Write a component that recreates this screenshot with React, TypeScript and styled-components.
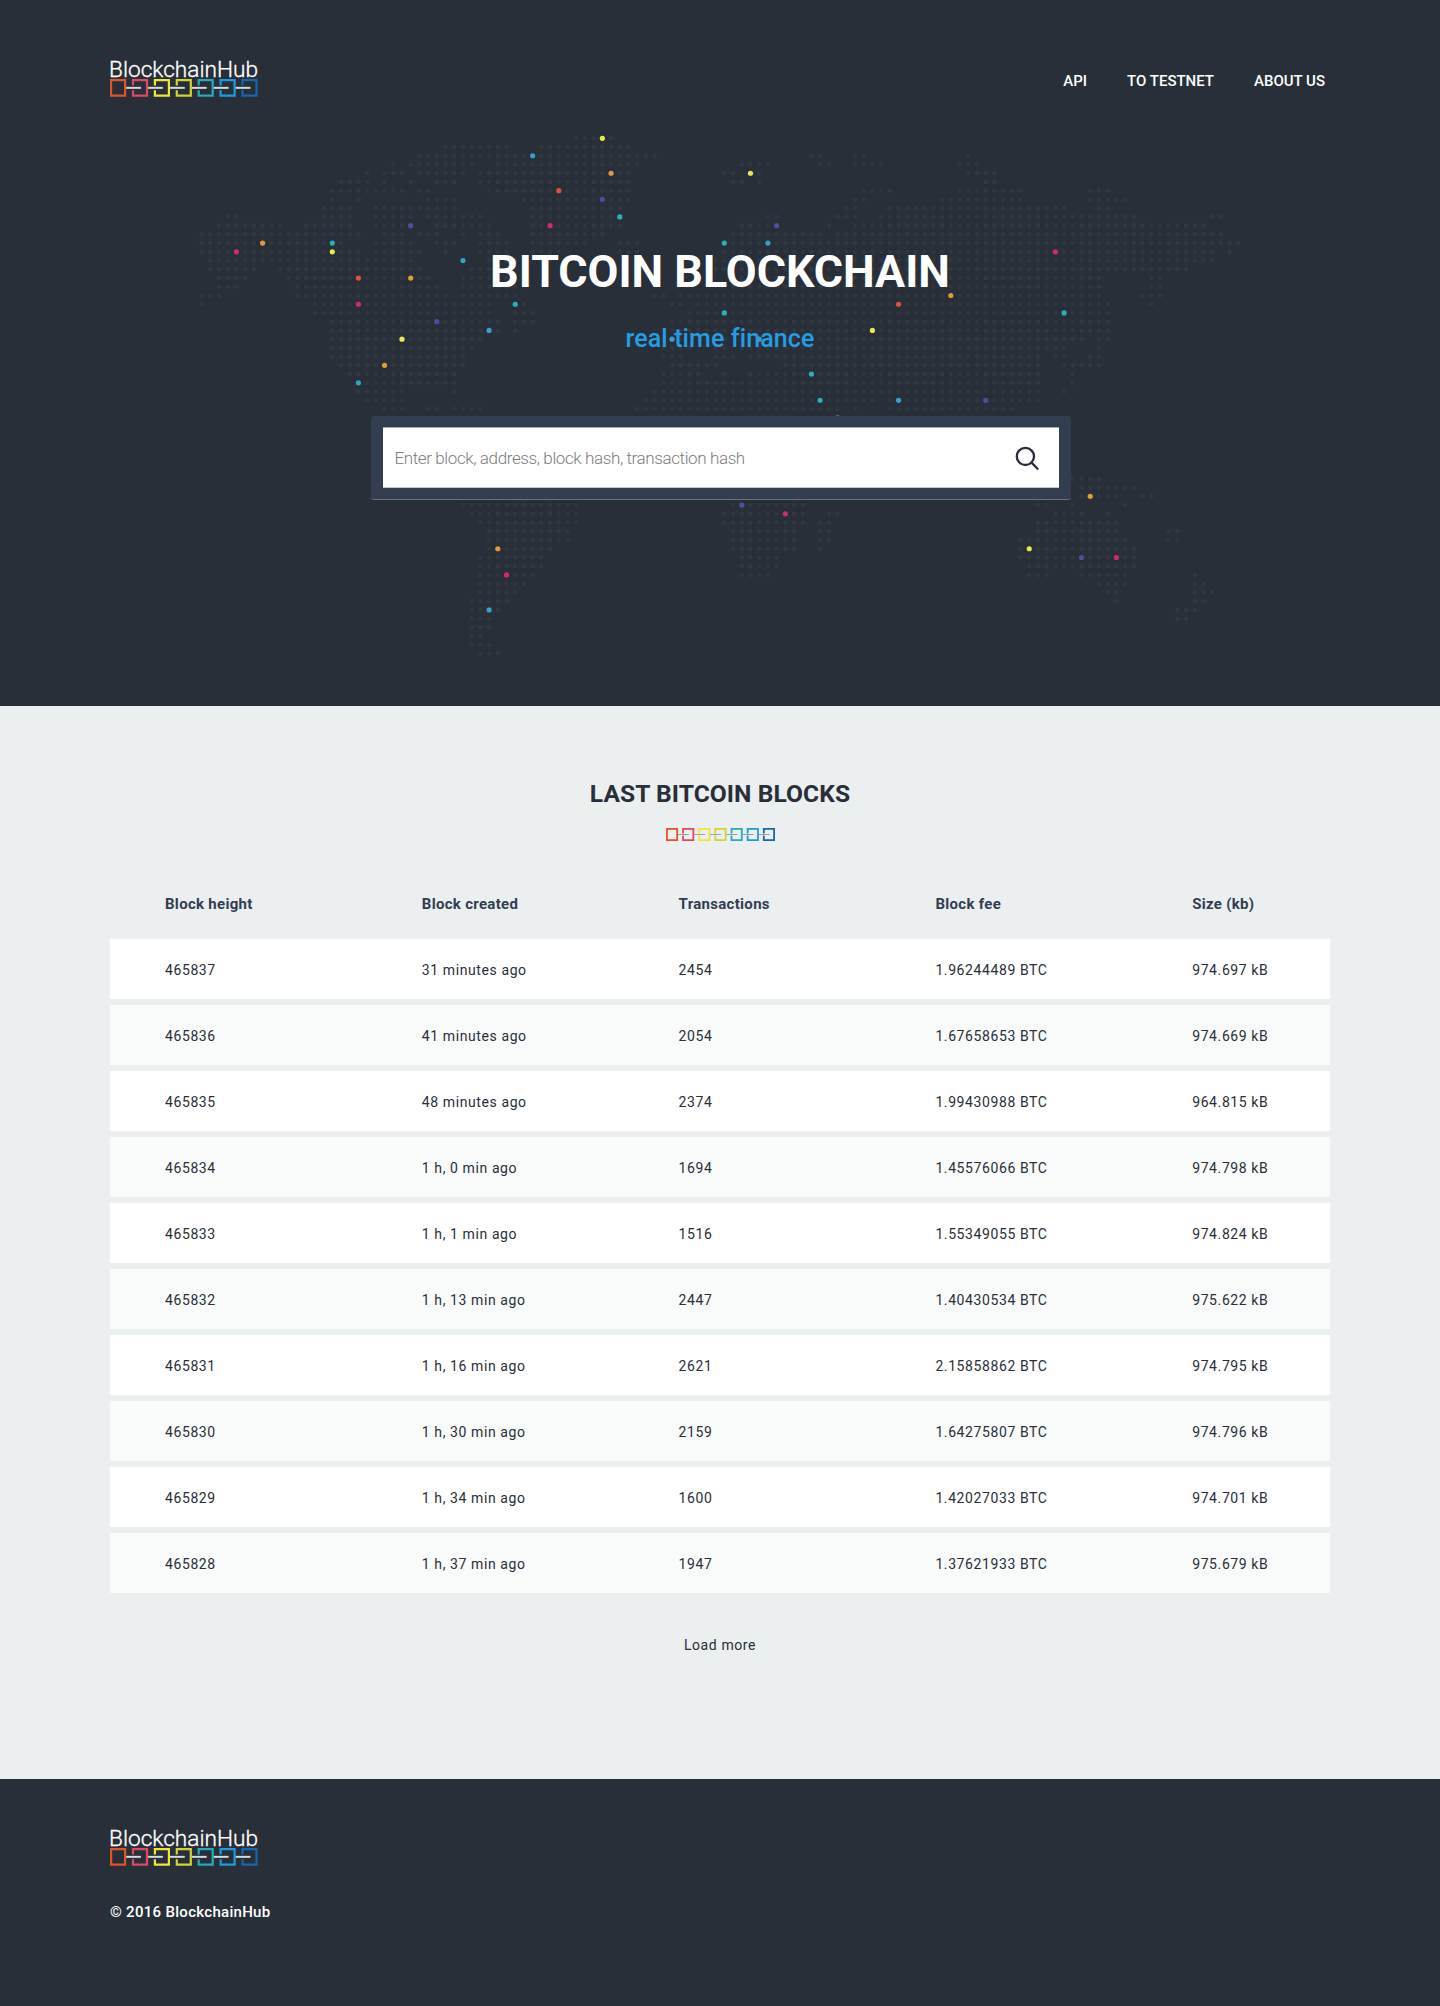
import React from "react";
import styled, { createGlobalStyle, css } from "styled-components";

const GlobalStyle = createGlobalStyle`
  *, *::before, *::after { box-sizing: border-box; }
  body {
    margin: 0;
    background: #282f39;
    font-family: Roboto, "Liberation Sans", sans-serif;
    color: #292e38;
  }
`;

const Hero = styled.header`
  position: relative;
  height: 706px;
  background: #282f39;
  overflow: hidden;
`;

const MapLayer = styled.svg`
  position: absolute;
  left: 0;
  top: 0;
  pointer-events: none;
`;

const Container = styled.div`
  position: relative;
  width: 1220px;
  margin: 0 auto;
`;

const TopBar = styled(Container)`
  display: flex;
  justify-content: space-between;
  align-items: flex-start;
  height: 98px;
  padding-top: 52px;
`;

const Nav = styled.nav`
  display: flex;
  gap: 40px;
  padding: 20px 5px 0 0;
`;

const NavLink = styled.a`
  font-size: 15px;
  line-height: 18px;
  font-weight: 500;
  color: #fff;
  text-decoration: none;
  text-transform: uppercase;
`;

const Intro = styled.div`
  position: relative;
  display: flex;
  flex-direction: column;
  align-items: center;
  padding-top: 147px;
`;

const Title = styled.h1`
  margin: 0;
  font-size: 44.8px;
  line-height: 54px;
  font-weight: 700;
  color: #fff;
`;

const Tagline = styled.p`
  margin: 24px 0 0;
  font-size: 25px;
  line-height: 32px;
  font-weight: 500;
  letter-spacing: 0.1px;
  color: #259de3;
`;

const SearchFrame = styled.form`
  width: 700px;
  height: 84px;
  margin: 61px 0 0 1px;
  padding: 11px 12px;
  background: #333d50;
  border-radius: 3px;
  border-bottom: 1px solid #697080;
`;

const SearchField = styled.label`
  display: flex;
  align-items: center;
  height: 61px;
  padding: 0 19px 0 12px;
  background: #fff;
  border-top: 1px solid #a5a8ae;
  border-bottom: 1px solid #c6c8cc;
`;

const SearchInput = styled.input`
  flex: 1;
  border: 0;
  padding: 0;
  outline: 0;
  background: transparent;
  font: 300 17px/24px Roboto, sans-serif;
  letter-spacing: -0.39px;
  &::placeholder { color: #7c7c7c; opacity: 1; }
`;

const Blocks = styled.main`
  height: 1073px;
  background: #ebeff0;
  padding-top: 73px;
`;

const SectionHead = styled.div`
  display: flex;
  flex-direction: column;
  align-items: center;
`;

const SectionTitle = styled.h2`
  margin: 0 0 19px;
  font-size: 24.6px;
  line-height: 30px;
  font-weight: 700;
  letter-spacing: 0.06px;
`;

const Table = styled(Container)`
  display: flex;
  flex-direction: column;
  gap: 6px;
  margin-top: 34px;
`;

const Row = styled.div<{ $head?: boolean; $alt?: boolean }>`
  display: grid;
  grid-template-columns: repeat(4, 256.8px) 1fr;
  align-items: center;
  height: 60px;
  padding: 2px 0 0 55px;
  font-size: 14px;
  letter-spacing: 0.6px;
  background: ${(p) => (p.$alt ? "#f9fbfa" : "#fff")};
  ${(p) =>
    p.$head &&
    css`
      background: none;
      height: 58px;
      padding-top: 0;
      font-size: 15px;
      font-weight: 700;
      letter-spacing: 0.3px;
      color: #333d50;
    `}
`;

const LoadMore = styled.button`
  display: block;
  margin: 42px auto 0;
  padding: 0;
  border: 0;
  background: none;
  color: #292e38;
  font: 400 14px/20px Roboto, sans-serif;
  letter-spacing: 0.6px;
`;

const Footer = styled.footer`
  height: 227px;
  padding-top: 42px;
  background: #282f39;
`;

const Copyright = styled.p`
  margin: 35px 0 0;
  font-size: 15px;
  line-height: 20px;
  font-weight: 500;
  letter-spacing: 0.3px;
  color: #fff;
`;

const LogoBox = styled.div`
  display: flex;
  width: 152px;
  height: 46px;
`;

const LINK_COLORS = ["#df5428", "#dc4964", "#f1e437", "#d0d52f", "#25abb9", "#1e9ae0", "#1766ae"];

function Links({ pitch, width, height, stroke, bar, barColor }: {
  pitch: number; width: number; height: number; stroke: number; bar: number; barColor: string;
}) {
  const h = stroke / 2;
  const right = width - h;
  const bottom = height - h;
  const mid = height / 2;
  const gap = bar * 1.15;
  return (
    <g fill="none">
      {LINK_COLORS.map((color, i) => (
        <path
          key={color}
          transform={`translate(${i * pitch} 0)`}
          stroke={color}
          strokeWidth={stroke}
          d={i === 0
            ? `M${h} ${h}H${right}V${bottom}H${h}Z`
            : `M${h} ${mid - gap}V${h}H${right}V${bottom}H${h}V${mid + gap}`}
        />
      ))}
      {LINK_COLORS.slice(1).map((color, i) => (
        <path key={color} stroke={barColor} strokeWidth={bar} d={`M${i * pitch + width} ${mid}H${(i + 1) * pitch + width * 0.56}`} />
      ))}
    </g>
  );
}

function Logo() {
  return (
    <LogoBox>
      <svg width="152" height="46" viewBox="0 -8 152 46" aria-label="BlockchainHub">
        <text x="-1" y="16.6" fill="#fff" stroke="#fff" strokeWidth="0.3" fontFamily='Roboto, "Liberation Sans", sans-serif' fontWeight="300" fontSize="22" textLength="149" lengthAdjust="spacingAndGlyphs">
          BlockchainHub
        </text>
        <g transform="translate(0 19)">
          <Links pitch={21.9} width={16.2} height={17.7} stroke={2.2} bar={2} barColor="#d5dadd" />
        </g>
      </svg>
    </LogoBox>
  );
}

const MAP_ROWS = [
  "43-47",
  "28-35 39-49",
  "25-52 70-71 75-76 88",
  "22 24-31 34-50 62-65 71-72 75-78 87-89",
  "19 21-23 25-30 32-49 60-61 63-64 88-91",
  "16-19 21 24 27-29 32-49 61-62 64 90-91",
  "15-23 25-26 33-49 76-79 87-94 102-104",
  "15 18 26-29 37-49 75-76 85-94 102-106",
  "14-17 20-29 38-48 74-75 79-99 103-104",
  "3-4 14-17 20-24 26-32 38-48 65-66 73-75 78-107 116-117",
  "2-9 12-17 20-24 27-33 38-48 62-66 72 75-115",
  "0-18 21-23 25-27 30 32-34 38-46 61-71 73-117",
  "0-16 20-24 27-29 32-35 38-44 48-50 60-119",
  "0-18 20-25 28 32-35 38-41 48-50 60-116 118",
  "1-24 30 33-36 39-40 59-116",
  "1-6 9-25 31-35 59-113",
  "2-5 10-26 30-37 61-103 109-110",
  "2-4 11-27 30-37 60-103 109-110",
  "0-2 11-28 30-36 52-53 55-103 108-110",
  "0 13-33 36-37 54-55 57-104 109",
  "13-33 36-38 56-104",
  "15-34 36-38 54-104",
  "15-34 36 54-104",
  "15-32 53-55 58-60 62-101 103-104",
  "15-31 53-56 59-60 62-99 103",
  "15-30 53-55 59-61 63-96 98-99 102-103",
  "16-30 54-59 67-96 99-103",
  "17-29 53-57 60 63-96 100",
  "18-29 53-96 100",
  "18-23 29 52-96 99",
  "19-23 51-77 79-96",
  "21-23 26-27 29-32 50-73 75 79-93",
  "", "", "", "", "", "", "",
  "100-103",
  "101-107",
  "101-105 108-109",
  "30-43 61-69 96-97 100 106",
  "31-43 60-69 72-73 98-101 104",
  "32-43 60-69 71-72 96-105",
  "33-42 61-68 71-72 96-105 111-112",
  "33-42 61-68 71-72 94-106 111-112",
  "33-40 61-68 71 94-107",
  "32-39 62-66 94-107",
  "32-39 62-66 95-107",
  "32-38 62-65 95-97 101-106 114",
  "32-37 103-106 114-115",
  "32-36 104-105 114-116",
  "31-35 105 114-115",
  "31-34 112-114",
  "31-33 112-113",
  "31-33",
  "31-32",
  "31-33",
  "32-34",
];

const NODES: Record<string, [number, number][]> = {
  "#3b9dcc": [[38, 2], [30, 14], [33, 22], [18, 28], [65, 12], [80, 30], [33, 54], [54, 23], [64, 23]],
  "#d32a6d": [[4, 13], [18, 19], [40, 10], [98, 13], [35, 50], [67, 43], [105, 48]],
  "#e39a38": [[7, 12], [24, 16], [21, 26], [47, 4], [86, 18], [34, 47], [102, 41]],
  "#2cb0b6": [[15, 12], [36, 19], [48, 9], [60, 12], [60, 20], [70, 27], [71, 30], [73, 32], [99, 20]],
  "#e9ea52": [[15, 13], [23, 23], [46, 0], [63, 4], [77, 22], [95, 47]],
  "#48519f": [[24, 10], [27, 21], [46, 7], [66, 10], [90, 30], [62, 42], [101, 48]],
  "#d9533f": [[18, 16], [41, 6], [80, 19]],
};

const mapX = (col: number) => 201.6 + col * 8.712;
const mapY = (row: number) => 138.3 + row * 8.733;

function expand(spec: string): number[] {
  return spec.split(" ").filter(Boolean).flatMap((part) => {
    const [from, to = from] = part.split("-").map(Number);
    return Array.from({ length: to - from + 1 }, (_, i) => from + i);
  });
}

function WorldMap() {
  return (
    <MapLayer width="1440" height="706" aria-hidden="true">
      <g fill="#303741">
        {MAP_ROWS.map((spec, row) =>
          expand(spec).map((col) => <circle key={`${row}-${col}`} cx={mapX(col)} cy={mapY(row)} r="2.3" />)
        )}
      </g>
      {Object.entries(NODES).map(([color, points]) => (
        <g key={color} fill={color}>
          {points.map(([col, row]) => <circle key={`${col}-${row}`} cx={mapX(col)} cy={mapY(row)} r="2.6" />)}
        </g>
      ))}
    </MapLayer>
  );
}

const HEADINGS = ["Block height", "Block created", "Transactions", "Block fee", "Size (kb)"];

const BLOCKS = [
  ["465837", "31 minutes ago", "2454", "1.96244489 BTC", "974.697 kB"],
  ["465836", "41 minutes ago", "2054", "1.67658653 BTC", "974.669 kB"],
  ["465835", "48 minutes ago", "2374", "1.99430988 BTC", "964.815 kB"],
  ["465834", "1 h, 0 min ago", "1694", "1.45576066 BTC", "974.798 kB"],
  ["465833", "1 h, 1 min ago", "1516", "1.55349055 BTC", "974.824 kB"],
  ["465832", "1 h, 13 min ago", "2447", "1.40430534 BTC", "975.622 kB"],
  ["465831", "1 h, 16 min ago", "2621", "2.15858862 BTC", "974.795 kB"],
  ["465830", "1 h, 30 min ago", "2159", "1.64275807 BTC", "974.796 kB"],
  ["465829", "1 h, 34 min ago", "1600", "1.42027033 BTC", "974.701 kB"],
  ["465828", "1 h, 37 min ago", "1947", "1.37621933 BTC", "975.679 kB"],
];

export default function App() {
  return (
    <>
      <GlobalStyle />
      <Hero>
        <WorldMap />
        <TopBar>
          <Logo />
          <Nav>
            <NavLink>API</NavLink>
            <NavLink>To testnet</NavLink>
            <NavLink>About us</NavLink>
          </Nav>
        </TopBar>
        <Intro>
          <Title>BITCOIN BLOCKCHAIN</Title>
          <Tagline>real time finance</Tagline>
          <SearchFrame>
            <SearchField>
              <SearchInput placeholder="Enter block, address, block hash, transaction hash" />
              <svg width="26" height="26" viewBox="0 0 26 26" fill="none" stroke="#292e38" strokeWidth="2.3" strokeLinecap="round">
                <circle cx="11.4" cy="11.4" r="8.6" />
                <path d="M17.6 17.6L23.5 23.8" />
              </svg>
            </SearchField>
          </SearchFrame>
        </Intro>
      </Hero>
      <Blocks>
        <SectionHead>
          <SectionTitle>LAST BITCOIN BLOCKS</SectionTitle>
          <svg width="109" height="13" viewBox="0 0 109 13">
            <Links pitch={16.15} width={12.1} height={13} stroke={1.8} bar={0.9} barColor="#8f9699" />
          </svg>
        </SectionHead>
        <Table>
          <Row $head>{HEADINGS.map((h) => <span key={h}>{h}</span>)}</Row>
          {BLOCKS.map((block, i) => (
            <Row key={block[0]} $alt={i % 2 === 1}>
              {block.map((value) => <span key={value}>{value}</span>)}
            </Row>
          ))}
        </Table>
        <LoadMore>Load more</LoadMore>
      </Blocks>
      <Footer>
        <Container>
          <Logo />
          <Copyright>© 2016 BlockchainHub</Copyright>
        </Container>
      </Footer>
    </>
  );
}
